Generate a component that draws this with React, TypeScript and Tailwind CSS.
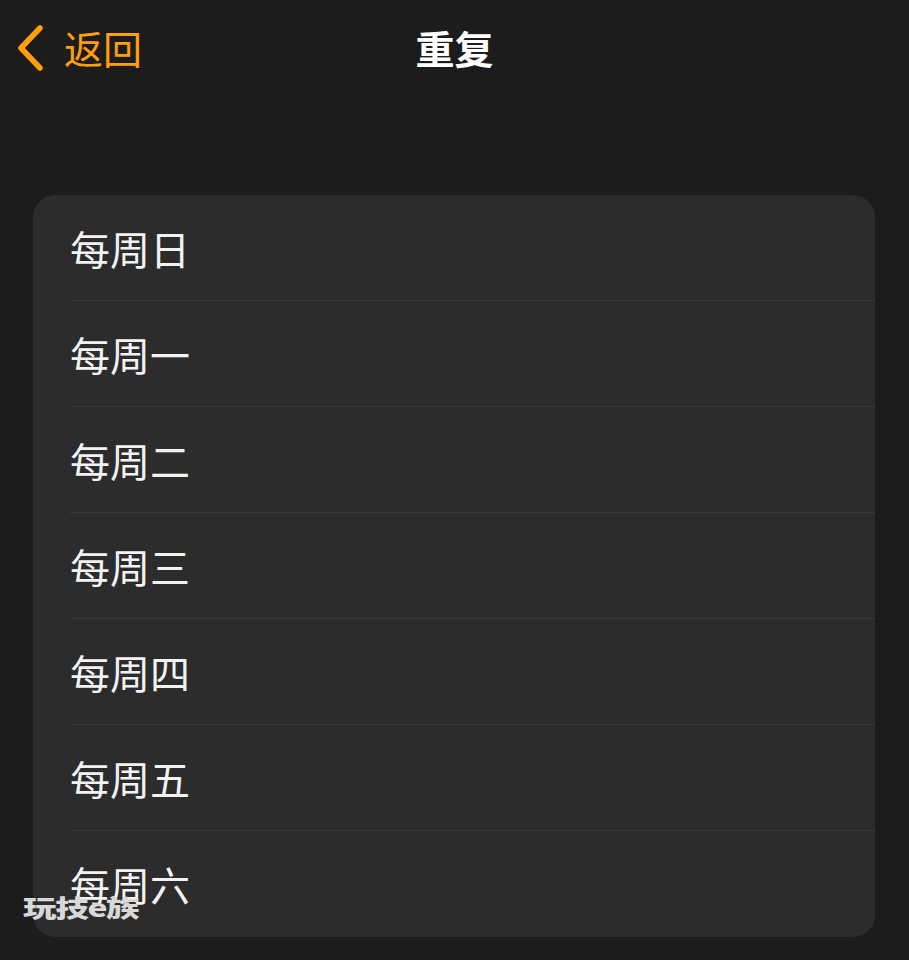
import React from "react";

const days = ["每周日", "每周一", "每周二", "每周三", "每周四", "每周五", "每周六"];

export default function App() {
  return (
    <div
      className="relative w-[909px] h-[960px] bg-[#1c1c1c] overflow-hidden"
      style={{ fontFamily: '"Noto Sans CJK SC", "Noto Sans", sans-serif' }}
    >
      <div className="relative h-[94px] flex items-center">
        <div className="flex items-center pl-[17px] gap-[20px] h-full">
          <svg width="28" height="46" viewBox="0 0 28 46" className="mt-[1px]">
            <path d="M23 3 L4 23 L23 43" fill="none" stroke="#FF9F0A" strokeWidth="5.5" strokeLinecap="round" strokeLinejoin="round" />
          </svg>
          <span className="text-[#FF9F0A] text-[39px] leading-none -ml-[1px]">返回</span>
        </div>
        <div className="absolute inset-0 flex items-center justify-center">
          <span className="text-white text-[39px] font-bold leading-none">重复</span>
        </div>
      </div>
      <div className="mt-[101px] mx-[33px] w-[842px] bg-[#2c2c2c] rounded-[22px] overflow-hidden">
        {days.map((d, i) => (
          <div key={d} className="pl-[37px]">
            <div
              className={
                "h-[106px] flex items-center " +
                (i < days.length - 1 ? "border-b border-[#3a3a3a]" : "")
              }
            >
              <span className="text-[#f2f2f2] text-[40px] leading-none">{d}</span>
            </div>
          </div>
        ))}
      </div>
      <div className="absolute left-[23px] top-[895px] origin-left scale-x-[1.4] text-[#d8d8d8] text-[24px] font-black leading-none tracking-[-1px]">
        玩技e族
      </div>
    </div>
  );
}
